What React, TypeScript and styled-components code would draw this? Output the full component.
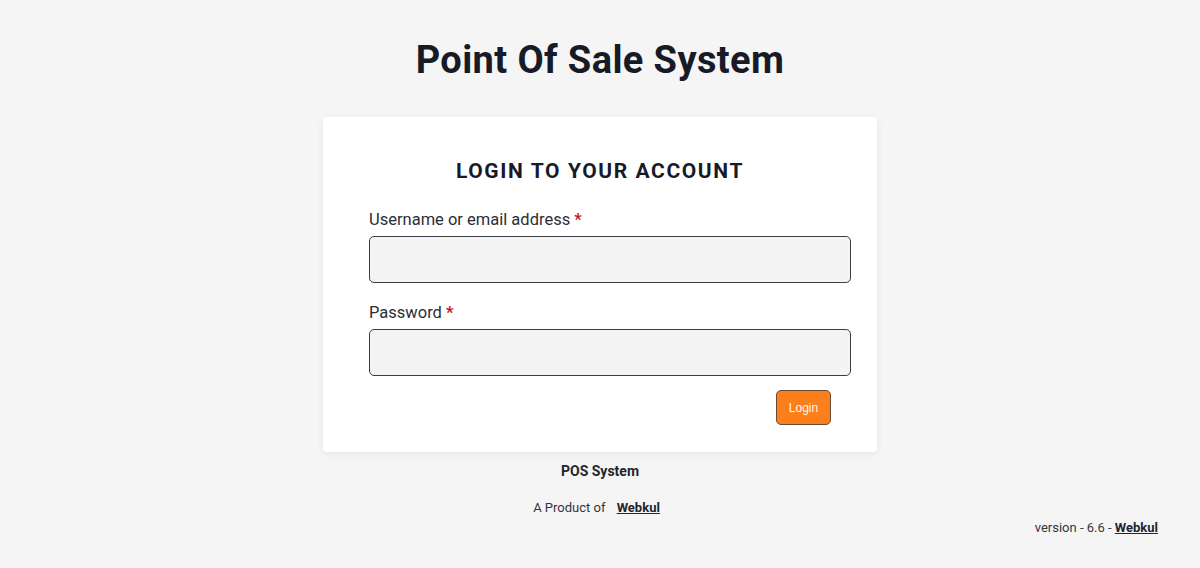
import React from "react";
import styled, { createGlobalStyle } from "styled-components";

const Global = createGlobalStyle`
  html, body { margin: 0; padding: 0; background: #f5f5f5; }
  body { font-family: Roboto, "Liberation Sans", Arial, sans-serif; color: #1c1f2a; }
  * { box-sizing: border-box; }
`;

const Page = styled.div`
  min-height: 568px;
  display: flex;
  flex-direction: column;
  align-items: center;
`;

const Title = styled.h1`
  margin: 37px 0 0;
  font-size: 38px;
  line-height: 46px;
  font-weight: 700;
  color: #171a27;
  letter-spacing: 0.4px;
`;

const Card = styled.form`
  margin-top: 34px;
  width: 554px;
  background: #fff;
  border-radius: 4px;
  box-shadow: 0 2px 8px rgba(0, 0, 0, 0.06);
  padding: 42px 26px 27px 46px;
  display: flex;
  flex-direction: column;
`;

const Heading = styled.h2`
  margin: 0 0 26px;
  text-align: center;
  font-size: 21px;
  line-height: 25px;
  font-weight: 700;
  letter-spacing: 1.6px;
  color: #171a27;
  padding-right: 20px;
`;

const Field = styled.div<{ $gap?: number }>`
  display: flex;
  flex-direction: column;
  gap: 7px;
  margin-bottom: ${(p) => p.$gap ?? 0}px;
`;

const Label = styled.label`
  font-size: 16.5px;
  line-height: 19px;
  color: #2b2e36;
`;

const Req = styled.span`
  color: #c4161c;
  font-weight: 700;
  margin-left: 4px;
`;

const Input = styled.input`
  height: 47px;
  width: 100%;
  background: #f4f4f5;
  border: 1px solid #3a3d45;
  border-radius: 5px;
  padding: 0 12px;
  font-size: 16px;
  outline: none;
`;

const Actions = styled.div`
  display: flex;
  justify-content: flex-end;
  padding-right: 20px;
  margin-top: 14px;
`;

const Button = styled.button`
  width: 55px;
  height: 35px;
  background: #fc7f1b;
  color: #fff5ea;
  border: 1px solid #6b4a32;
  border-radius: 5px;
  font-family: "Liberation Sans", Arial, sans-serif;
  font-size: 12px;
  padding: 0;
  cursor: pointer;
`;

const Brand = styled.div`
  margin-top: 11px;
  font-size: 14px;
  line-height: 16px;
  font-weight: 700;
  color: #23262e;
`;

const Product = styled.div`
  margin-top: 21px;
  padding-right: 7px;
  font-size: 13px;
  line-height: 16px;
  color: #33363d;
`;

const Link = styled.a`
  font-weight: 700;
  color: #23262e;
  text-decoration: underline;
  margin-left: 8px;
`;

const VersionRow = styled.div`
  align-self: stretch;
  display: flex;
  justify-content: flex-end;
  padding-right: 42px;
  margin-top: 4px;
  font-size: 13px;
  line-height: 16px;
  color: #33363d;
`;

const VLink = styled.a`
  font-weight: 700;
  color: #23262e;
  text-decoration: underline;
`;

export default function App() {
  return (
    <>
      <Global />
      <Page>
        <Title>Point Of Sale System</Title>
        <Card onSubmit={(e) => e.preventDefault()}>
          <Heading>LOGIN TO YOUR ACCOUNT</Heading>
          <Field $gap={20}>
            <Label>
              Username or email address<Req>*</Req>
            </Label>
            <Input type="text" />
          </Field>
          <Field>
            <Label>
              Password<Req>*</Req>
            </Label>
            <Input type="password" />
          </Field>
          <Actions>
            <Button type="submit">Login</Button>
          </Actions>
        </Card>
        <Brand>POS System</Brand>
        <Product>
          A Product of <Link href="#">Webkul</Link>
        </Product>
        <VersionRow>
          <span>
            version - 6.6 - <VLink href="#">Webkul</VLink>
          </span>
        </VersionRow>
      </Page>
    </>
  );
}
